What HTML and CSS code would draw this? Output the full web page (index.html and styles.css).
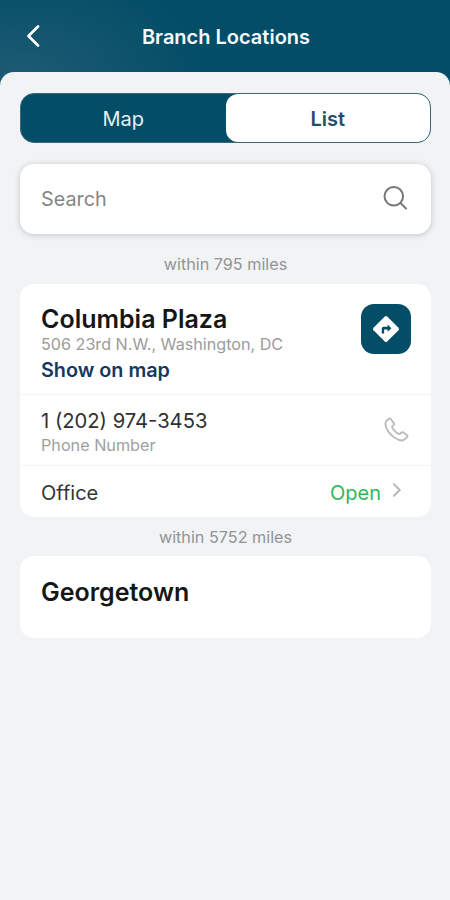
FILE: index.html
```html
<!doctype html>
<html lang="en">
<head>
<meta charset="utf-8">
<title>Branch Locations</title>
<link rel="stylesheet" href="styles.css">
</head>
<body>
<header class="header">
	<svg class="back" width="14" height="22" viewBox="0 0 14 22"><path d="M12 1.5L2.5 11L12 20.5"/></svg>
	<h1>Branch Locations</h1>
</header>

<main class="sheet">
	<div class="tabs">
		<div class="tab">Map</div>
		<div class="tab active">List</div>
	</div>

	<div class="search">
		<span class="searchText">Search</span>
		<svg class="searchIcon" width="26" height="26" viewBox="0 0 26 26"><circle cx="11.8" cy="11.3" r="9.3"/><path d="M18.5 18L24 23.5"/></svg>
	</div>

	<p class="distance">within 795 miles</p>

	<section class="card">
		<div class="place">
			<div>
				<h2>Columbia Plaza</h2>
				<p class="address">506 23rd N.W., Washington, DC</p>
				<p class="show">Show on map</p>
			</div>
			<div class="directions">
				<svg width="28" height="28" viewBox="0 0 28 28">
					<path fill="#fff" d="M12.8 1.5Q14 .4 15.2 1.5L26.5 12.8Q27.6 14 26.5 15.2L15.2 26.5Q14 27.6 12.8 26.5L1.5 15.2Q.4 14 1.5 12.8Z"/>
					<path fill="#034d66" d="M9.8 18.6V13.4Q9.8 11.8 11.4 11.8H15.6V9.6L19.4 13.2L15.6 16.8V14.4H12.1V18.6Z"/>
				</svg>
			</div>
		</div>
		<div class="row phoneRow">
			<div>
				<p class="number">1 (202) 974-3453</p>
				<p class="caption">Phone Number</p>
			</div>
			<svg class="phone" width="26" height="26" viewBox="0 0 26 26"><path d="M5.9 1.8L3.2 4.3C1 7.4 4.2 14 8.1 17.9C12.2 21.9 18.6 25 21.5 22.6L24.2 19.9Q24.8 19 24 18.2L20.2 15.4Q19.2 14.8 18.4 15.5L16.7 17C14.7 17.4 8.6 11.4 9.1 9.6L10.8 7.9Q11.4 7.1 10.8 6.1L7.7 2Q6.8 1.2 5.9 1.8Z"/></svg>
		</div>
		<div class="row officeRow">
			<span>Office</span>
			<span class="open">Open</span>
			<svg class="chevron" width="10" height="14" viewBox="0 0 10 14"><path d="M2 1.2L7.8 7L2 12.8"/></svg>
		</div>
	</section>

	<p class="distance far">within 5752 miles</p>

	<section class="card next">
		<h2>Georgetown</h2>
	</section>
</main>
</body>
</html>
```

FILE: styles.css
```css
* {
	box-sizing: border-box;
}
body {
	margin: 0;
	height: 900px;
	overflow: hidden;
	font-family: Inter, sans-serif;
	background: radial-gradient(ellipse 190px 110px at 20px 75px, #1d5b73, #034d66) no-repeat #034d66;
	background-size: 450px 100px;
	display: flex;
	flex-direction: column;
}
h1, h2, p {
	margin: 0;
	white-space: nowrap;
}
svg {
	display: block;
	fill: none;
	stroke-linecap: round;
	stroke-linejoin: round;
}
.header {
	height: 72px;
	display: grid;
	grid-template-columns: 48px 1fr 46px;
	align-items: center;
}
.back {
	margin-left: 26px;
	stroke: #fff;
	stroke-width: 2.6;
}
h1 {
	padding-top: 2px;
	text-align: center;
	font-size: 20px;
	line-height: 24px;
	font-weight: 600;
	color: #f5fafc;
}
.sheet {
	flex: 1;
	padding: 21px 19px 0 20px;
	background: #f1f3f5;
	border-radius: 14px 14px 0 0;
}
.tabs {
	height: 50px;
	display: flex;
	border: 1px solid #3d6879;
	border-radius: 14px;
	background: #034d66;
	overflow: hidden;
}
.tab {
	flex: 1;
	display: flex;
	align-items: center;
	justify-content: center;
	padding-top: 2px;
	font-size: 20px;
	color: #e6f0f4;
}
.active {
	background: #fff;
	border-radius: 12px;
	font-weight: 600;
	color: #234f68;
}
.search {
	height: 70px;
	margin-top: 21px;
	padding: 0 23px 0 21px;
	display: flex;
	align-items: center;
	justify-content: space-between;
	border-radius: 14px;
	background: #fff;
	box-shadow: 0 1px 6px rgba(0, 0, 0, .2);
}
.searchText {
	font-size: 19.8px;
	color: #858585;
}
.searchIcon {
	margin-top: -2px;
	stroke: #777;
	stroke-width: 2;
}
.distance {
	height: 50px;
	line-height: 60px;
	text-align: center;
	font-size: 16.2px;
	color: #929497;
}
.card {
	border-radius: 14px;
	background: #fff;
}
.place {
	height: 110px;
	padding: 20px 20px 0 21px;
	display: flex;
	justify-content: space-between;
}
h2 {
	font-size: 25px;
	line-height: 30px;
	font-weight: 600;
	color: #161616;
}
.address {
	font-size: 16.15px;
	line-height: 20px;
	color: #9b9b9b;
}
.show {
	margin-top: 4px;
	font-size: 19.8px;
	line-height: 24px;
	font-weight: 600;
	color: #16385f;
}
.directions {
	width: 50px;
	height: 50px;
	display: flex;
	align-items: center;
	justify-content: center;
	border-radius: 13px;
	background: #034d66;
}
.row {
	display: flex;
	border-top: 1px solid #f3f4f5;
	padding-left: 21px;
}
.phoneRow {
	height: 71px;
	padding-top: 14px;
	padding-right: 22px;
	justify-content: space-between;
}
.number {
	font-size: 20.2px;
	line-height: 24px;
	color: #303030;
}
.caption {
	font-size: 16.2px;
	line-height: 24px;
	color: #a0a0a0;
}
.phone {
	margin-top: 8px;
	stroke: #bcbcbe;
	stroke-width: 1.9;
}
.officeRow {
	height: 52px;
	padding-top: 2px;
	padding-right: 29px;
	align-items: center;
	font-size: 20px;
	color: #333;
}
.open {
	margin-left: auto;
	color: #2fb85a;
}
.chevron {
	margin: -5px 0 0 11px;
	stroke: #b9b9bc;
	stroke-width: 2;
}
.far {
	height: 39px;
	line-height: 40px;
}
.next {
	height: 82px;
	padding: 21px;
}
```
